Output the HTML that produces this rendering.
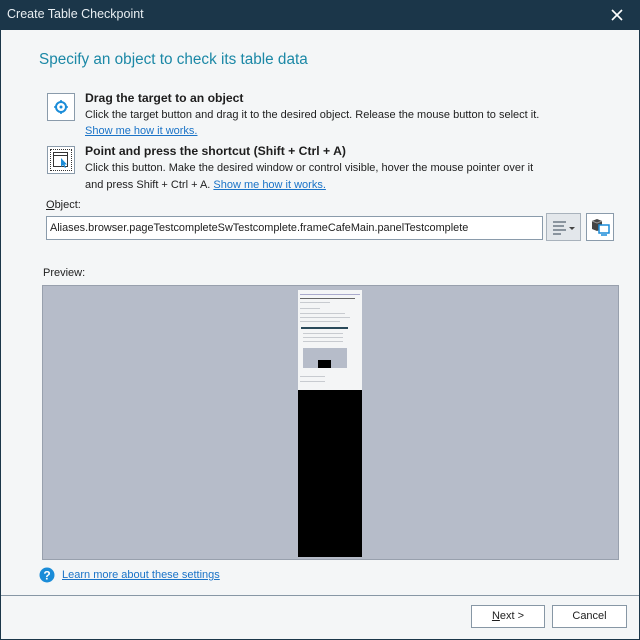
<!DOCTYPE html>
<html><head><style>
*{margin:0;padding:0;box-sizing:border-box}
body{width:640px;height:640px;background:#f4f6f7;font-family:"Liberation Sans",sans-serif;font-size:11px;color:#1e1e1e;position:relative;overflow:hidden}
.a{position:absolute;white-space:nowrap}
a{color:#1a73c7;text-decoration:underline}
.btn{position:absolute;border:1px solid #8797a5;background:#fff;text-align:center;line-height:21px;font-size:11px}
.ln{position:absolute;height:1px;background:#c8cbd0}
</style></head><body>
<div class="a" style="left:0;top:0;width:640px;height:30px;background:#1b3649"></div>
<div class="a" style="left:7px;top:7px;color:#e8eef2;font-size:12.5px">Create Table Checkpoint</div>
<svg class="a" style="left:611px;top:9px" width="12" height="12"><path d="M1 1L11 11M11 1L1 11" stroke="#fff" stroke-width="1.6"/></svg>
<div class="a" style="left:0;top:30px;width:1px;height:610px;background:#1b3649"></div>
<div class="a" style="right:0;top:30px;width:1px;height:610px;background:#1b3649"></div>
<div class="a" style="left:0;bottom:0;width:640px;height:1px;background:#1b3649"></div>

<div class="a" style="left:39px;top:51px;font-size:15.3px;color:#1b88a6">Specify an object to check its table data</div>

<div class="a" style="left:47px;top:93px;width:28px;height:28px;border:1px solid #8a9bab;background:#fff"></div>
<svg class="a" style="left:53px;top:99px" width="16" height="16"><circle cx="8" cy="8" r="5" fill="none" stroke="#1a8cd8" stroke-width="2"/><circle cx="8" cy="8" r="1.5" fill="#1a8cd8"/><path d="M8 1V4M8 12V15M1 8H4M12 8H15" stroke="#1a8cd8" stroke-width="1.6"/></svg>
<div class="a" style="left:85px;top:91px;font-weight:bold;font-size:12.2px">Drag the target to an object</div>
<div class="a" style="left:85px;top:109px">Click the target button and drag it to the desired object. Release the mouse button to select it.</div>
<div class="a" style="left:85px;top:125px"><a>Show me how it works.</a></div>

<div class="a" style="left:47px;top:146px;width:28px;height:28px;border:1px solid #8a9bab;background:#fff"></div>
<div class="a" style="left:50px;top:149px;width:22px;height:22px;border:1px dotted #333"></div>
<svg class="a" style="left:52px;top:151px" width="18" height="18"><rect x="1.5" y="1.5" width="14" height="14" fill="none" stroke="#333"/><path d="M1.5 4.5H15.5" stroke="#333"/><path d="M9 7L9 16L11 14L13 17L14 16.5L12.5 13.5L15 13.5Z" fill="#1a8cd8"/></svg>
<div class="a" style="left:85px;top:144px;font-weight:bold;font-size:12.2px">Point and press the shortcut (Shift + Ctrl + A)</div>
<div class="a" style="left:85px;top:162px">Click this button. Make the desired window or control visible, hover the mouse pointer over it</div>
<div class="a" style="left:85px;top:179px">and press Shift + Ctrl + A. <a>Show me how it works.</a></div>

<div class="a" style="left:46px;top:199px"><u>O</u>bject:</div>
<div class="a" style="left:46px;top:216px;width:497px;height:24px;border:1px solid #8a9bab;background:#fff;padding:5px 3px;overflow:hidden;font-size:10.9px">Aliases.browser.pageTestcompleteSwTestcomplete.frameCafeMain.panelTestcomplete</div>
<div class="a" style="left:546px;top:213px;width:35px;height:28px;border:1px solid #a8b2bc;background:#e3e7eb"></div>
<svg class="a" style="left:551px;top:219px" width="26" height="16"><path d="M2 3H15M2 7H13M2 11H15M2 15H10" stroke="#8a949e" stroke-width="2"/><path d="M18 8H24L21 11Z" fill="#444"/></svg>
<div class="a" style="left:586px;top:213px;width:28px;height:28px;border:1px solid #8a9bab;background:#fff"></div>
<svg class="a" style="left:589px;top:216px" width="22" height="22"><path d="M3 5L8 3L13 5V13L8 15L3 13Z" fill="#444"/><path d="M3 5L8 7L13 5" stroke="#999" fill="none"/><rect x="10" y="9" width="10" height="8" fill="#fff" stroke="#1a8cd8" stroke-width="1.5"/><path d="M12 19H18" stroke="#1a8cd8" stroke-width="1.5"/></svg>

<div class="a" style="left:43px;top:267px">Preview:</div>
<div class="a" style="left:42px;top:285px;width:577px;height:275px;background:#b6bcc9;border:1px solid #98a0ad"></div>
<div class="a" style="left:298px;top:290px;width:64px;height:100px;background:#f4f5f6"></div>
<div class="ln" style="left:300px;top:294px;width:60px;background:#aac"></div>
<div class="ln" style="left:300px;top:298px;width:55px;background:#666"></div>
<div class="ln" style="left:300px;top:302px;width:30px"></div>
<div class="ln" style="left:300px;top:308px;width:20px"></div>
<div class="ln" style="left:300px;top:313px;width:45px"></div>
<div class="ln" style="left:300px;top:317px;width:50px"></div>
<div class="ln" style="left:300px;top:321px;width:40px"></div>
<div class="a" style="left:301px;top:327px;width:47px;height:2px;background:#2a4a5a"></div>
<div class="ln" style="left:303px;top:333px;width:40px"></div>
<div class="ln" style="left:303px;top:337px;width:40px"></div>
<div class="ln" style="left:303px;top:341px;width:40px"></div>
<div class="a" style="left:303px;top:348px;width:44px;height:20px;background:#b6bcc9"></div>
<div class="a" style="left:318px;top:360px;width:13px;height:8px;background:#000"></div>
<div class="ln" style="left:300px;top:376px;width:25px"></div>
<div class="ln" style="left:300px;top:381px;width:25px"></div>
<div class="a" style="left:298px;top:390px;width:64px;height:167px;background:#000"></div>

<svg class="a" style="left:39px;top:567px" width="16" height="16"><circle cx="8" cy="8" r="7.5" fill="#1a8cd8"/><text x="8" y="12.5" font-size="12" font-weight="bold" fill="#fff" text-anchor="middle" font-family="Liberation Sans">?</text></svg>
<div class="a" style="left:62px;top:569px"><a>Learn more about these settings</a></div>

<div class="a" style="left:1px;top:595px;width:638px;height:1px;background:#8797a5"></div>
<div class="btn" style="left:471px;top:605px;width:74px;height:23px"><u>N</u>ext &gt;</div>
<div class="btn" style="left:552px;top:605px;width:75px;height:23px">Cancel</div>
</body></html>
